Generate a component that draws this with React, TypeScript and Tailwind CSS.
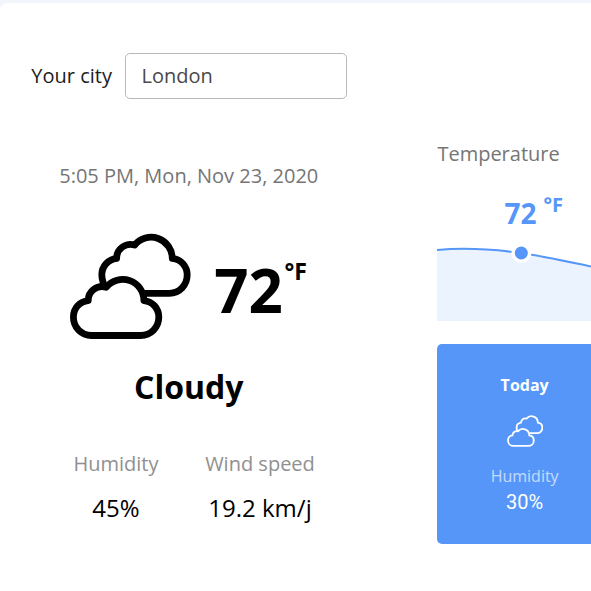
import React from "react";

function Clouds({ className, stroke }: { className: string; stroke: number }) {
  return (
    <svg className={className} viewBox="70 233.2 121 106" fill="none" stroke="currentColor" strokeWidth={stroke} strokeLinecap="round" strokeLinejoin="round">
      <path d="M103.3 283.2C102.3 280.5 101.8 278 101.8 275C101.8 266.500 108 259.800 116.600 258.600A14 14 0 0 1 134.700 245.200A21.200 21.200 0 0 1 172.300 258.600C181 259.500 187.200 266.300 187.200 275C187.200 285.200 179.500 293.500 169.500 293.500H145" />
      <path d="M91.500 335.700C81.300 335.700 73.400 327.700 73.400 317.300C73.400 308.500 79.800 301.500 88.200 300.800A14 14 0 0 1 106.300 287.400A21.200 21.200 0 0 1 143.900 300.800C152.600 301.700 158.800 308.500 158.800 317.300C158.800 327.600 151 335.700 140.700 335.700Z" />
    </svg>
  );
}

function Metric({ label, value, className }: { label: string; value: string; className: string }) {
  return (
    <div className={`flex flex-col items-center ${className}`}>
      <span className="text-[20px] leading-7 text-[#909090]">{label}</span>
      <span className="mt-[14px] text-2xl leading-8 text-black">{value}</span>
    </div>
  );
}

export default function App() {
  return (
    <div className="h-[591px] w-[591px] overflow-hidden bg-[#f2f6fc] pt-[3px] font-['Open_Sans',sans-serif] whitespace-nowrap">
      <main className="flex h-[588px] rounded-tl-[8px] bg-white">
        <section className="w-[437.4px] shrink-0 pt-[50px]">
          <label className="flex items-center pl-[31.3px] text-[20px] text-[#1c1c1c]">
            <span className="w-[93.7px]">Your city</span>
            <span className="flex h-[46px] w-[222px] items-center rounded-[5px] border border-[#b8b8b8] pl-[15.5px] text-[#494949]">London</span>
          </label>
          <div className="ml-[59px] flex w-[259.500px] flex-col items-center">
            <p className="mt-[63px] text-[20px] leading-7 text-[#757575]">5:05 PM, Mon, Nov 23, 2020</p>
            <div className="mt-[43px] flex h-[106px] w-full pl-[11px] text-black">
              <Clouds className="h-[106px] w-[121px] shrink-0" stroke={6.8} />
              <strong className="ml-[23.3px] mt-[17px] text-[60px] leading-[80px]">72</strong>
              <strong className="ml-[1.5px] mt-[22px] text-[23px] leading-8">°F</strong>
            </div>
            <h1 className="mt-[28px] text-[32px] leading-10 font-bold text-black">Cloudy</h1>
          </div>
          <div className="mt-[43px] flex pl-[73px]">
            <Metric className="w-[86px]" label="Humidity" value="45%" />
            <Metric className="ml-[46px] w-[110px]" label="Wind speed" value="19.2 km/j" />
          </div>
        </section>
        <section className="w-[153.6px] shrink-0 overflow-hidden pt-[137px]">
          <h2 className="text-[20px] leading-7 text-[#757575]">Temperature</h2>
          <div className="mt-[20px] flex h-[54px] pl-[67px] font-bold text-[#5596f8]">
            <span className="mt-[7px] text-[28px] leading-9">72</span>
            <span className="ml-[7px] mt-[3px] text-[20px] leading-7">°F</span>
          </div>
          <svg className="block h-[79px] w-[154px]" viewBox="0 0 154 79" fill="none">
            <path d="M0 8C34 5 62 8 84 11C108 14.500 130 19.500 154 24.500V79H0Z" fill="#ebf3fe" />
            <path d="M0 8C34 5 62 8 84 11C108 14.500 130 19.500 154 24.500" stroke="#5596f8" strokeWidth="2" />
            <circle cx="84.300" cy="11" r="10" fill="white" />
            <circle cx="84.300" cy="11" r="6.500" fill="#5596f8" />
          </svg>
          <article className="mt-[23px] flex h-[200px] w-[174.500px] flex-col items-center rounded-[5px] bg-[#5596f8] pt-[29px] text-white">
            <strong className="text-base leading-6">Today</strong>
            <Clouds className="ml-[1px] mt-[18px] h-8 w-[36.5px]" stroke={6} />
            <span className="mt-[17px] text-base leading-6 text-white/65">Humidity</span>
            <span className="font-['Roboto',sans-serif] text-[20px] leading-7">30%</span>
          </article>
        </section>
      </main>
    </div>
  );
}
